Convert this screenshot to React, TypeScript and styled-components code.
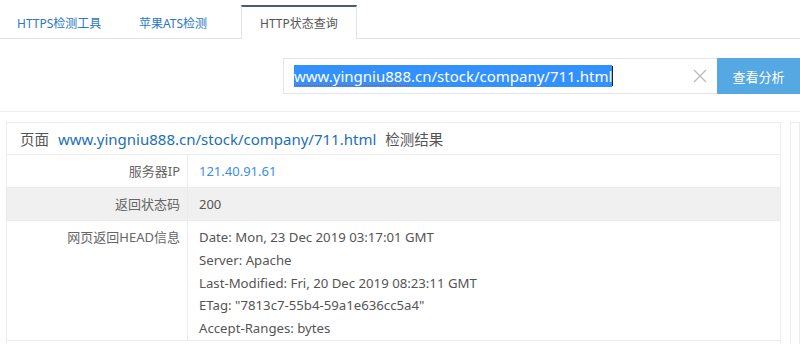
import styled, { createGlobalStyle } from 'styled-components';

const GlobalStyle = createGlobalStyle`
  * {
    box-sizing: border-box;
    margin: 0;
    padding: 0;
  }
  body {
    background: #fff;
    font-family: "Noto Sans", "Noto Sans CJK SC", sans-serif;
    overflow: hidden;
  }
`;

const TabBar = styled.ul`
  display: flex;
  align-items: flex-end;
  height: 39px;
  list-style: none;
  border-bottom: 1px solid #dfe4ec;
`;

const Tab = styled.li<{ $active?: boolean; $width: number; $indent: number }>`
  width: ${p => p.$width}px;
  height: ${p => (p.$active ? 34 : 33)}px;
  margin-bottom: ${p => (p.$active ? -1 : 0)}px;
  display: flex;
  align-items: center;
  padding-left: ${p => p.$indent}px;
  font-size: 12px;
  color: ${p => (p.$active ? '#555' : '#2b78c5')};
  background: #fff;
  border: 1px solid ${p => (p.$active ? '#dfe4ec' : 'transparent')};
  border-top: 2px solid ${p => (p.$active ? '#4f5b6b' : 'transparent')};
  border-bottom: none;
`;

const SearchBar = styled.div`
  display: flex;
  justify-content: flex-end;
  padding: 19px 0 17px;
  border-bottom: 1px solid #eef0f3;
`;

const InputBox = styled.div`
  width: 434px;
  height: 36px;
  display: flex;
  align-items: center;
  padding: 0 10px;
  border: 1px solid #e3e6ea;
  border-right: none;
  font-size: 15px;
  color: #333;
`;

const Selected = styled.span`
  background: #3390ff;
  color: #fff;
  line-height: 22px;
`;

const Misspelt = styled.span`
  text-decoration: underline dotted #e23c3c;
  text-decoration-thickness: 1px;
  text-decoration-skip-ink: none;
  text-underline-offset: 3px;
`;

const Caret = styled.span`
  display: inline-block;
  width: 1px;
  height: 20px;
  background: #222;
  vertical-align: middle;
`;

const Clear = styled.button`
  margin-left: auto;
  border: none;
  background: none;
  display: flex;
  align-items: center;
  padding: 0;
`;

const Submit = styled.button`
  width: 83px;
  height: 36px;
  border: none;
  background: #56a8e2;
  color: #fff;
  font-family: inherit;
  font-size: 13px;
`;

const Content = styled.div`
  display: flex;
  gap: 9px;
  padding: 10px 0 0 6px;
`;

const Panel = styled.div`
  flex: 0 0 775px;
  border: 1px solid #ececec;
  border-bottom: none;
`;

const SidePanel = styled.div`
  flex: 1;
  height: 240px;
  border: 1px solid #ececec;
`;

const PanelHead = styled.div`
  height: 32px;
  display: flex;
  align-items: center;
  gap: 9px;
  padding-left: 13px;
  font-size: 14.5px;
  color: #555;
  border-bottom: 1px solid #ececec;
`;

const HeadLink = styled.span`
  color: #1d6fb8;
  font-size: 15px;
`;

const Row = styled.div<{ $shade?: boolean }>`
  display: grid;
  grid-template-columns: 181px 1fr;
  background: ${p => (p.$shade ? '#f0f0f0' : '#fff')};
  border-bottom: 1px solid #ececec;
  font-size: 13px;
`;

const Label = styled.div`
  text-align: right;
  padding: 6px 7px 0 0;
  color: #666;
  border-right: 1px solid #ececec;
  min-height: 32px;
  line-height: 20px;
`;

const Value = styled.div<{ $link?: boolean }>`
  padding: 6px 11px 0;
  color: ${p => (p.$link ? '#3a8ee6' : '#555')};
  line-height: 20px;
`;

const Lines = styled.div`
  padding: 6px 11px 0;
  color: #555;
  font-size: 13.2px;
  line-height: 22.8px;
  margin-top: -1px;
`;

const headers = [
  'Date: Mon, 23 Dec 2019 03:17:01 GMT',
  'Server: Apache',
  'Last-Modified: Fri, 20 Dec 2019 08:23:11 GMT',
  'ETag: "7813c7-55b4-59a1e636cc5a4"',
  'Accept-Ranges: bytes',
];

const App = () => {
  return (
    <>
      <GlobalStyle />
      <TabBar>
        <Tab $width={119} $indent={16}>HTTPS检测工具</Tab>
        <Tab $width={122} $indent={19}>苹果ATS检测</Tab>
        <Tab $width={116} $indent={18} $active>HTTP状态查询</Tab>
      </TabBar>
      <SearchBar>
        <InputBox>
          <Selected>
            <Misspelt>www.yingniu888</Misspelt>.cn/stock/company/711.html
          </Selected>
          <Caret />
          <Clear>
            <svg width="14" height="14" viewBox="0 0 14 14">
              <path d="M1 1L13 13M13 1L1 13" stroke="#bbb" strokeWidth="1.3" fill="none" />
            </svg>
          </Clear>
        </InputBox>
        <Submit>查看分析</Submit>
      </SearchBar>
      <Content>
        <Panel>
          <PanelHead>
            页面 <HeadLink>www.yingniu888.cn/stock/company/711.html</HeadLink> 检测结果
          </PanelHead>
          <Row>
            <Label>服务器IP</Label>
            <Value $link>121.40.91.61</Value>
          </Row>
          <Row $shade>
            <Label>返回状态码</Label>
            <Value>200</Value>
          </Row>
          <Row>
            <Label>网页返回HEAD信息</Label>
            <Lines>
              {headers.map(h => (
                <div key={h}>{h}</div>
              ))}
            </Lines>
          </Row>
        </Panel>
        <SidePanel />
      </Content>
    </>
  );
};

export default App;
